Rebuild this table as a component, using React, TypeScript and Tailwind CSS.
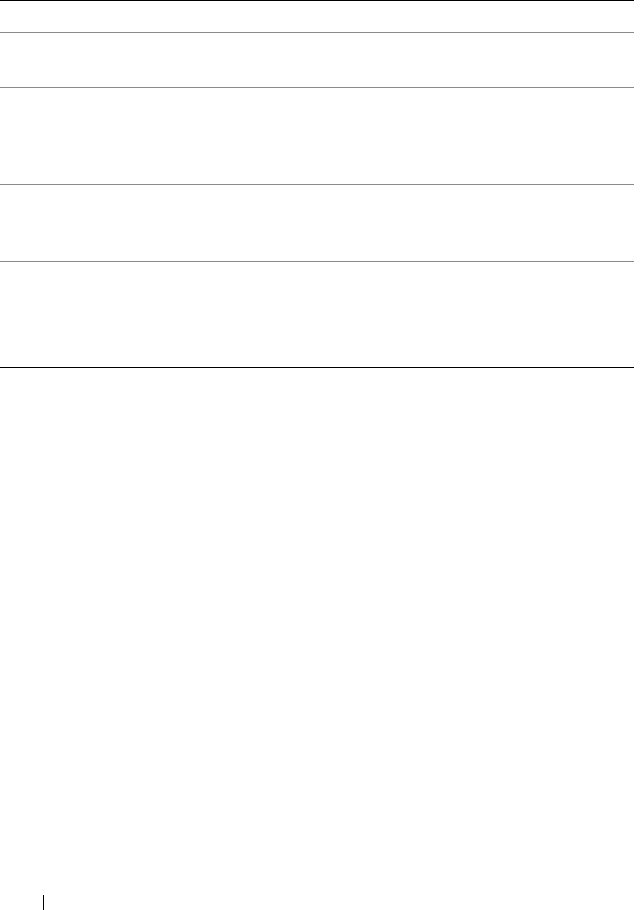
import React from "react";

const rows = [
  { h: "h-[32px]", last: false },
  { h: "h-[55px]", last: false },
  { h: "h-[97px]", last: false },
  { h: "h-[77px]", last: false },
  { h: "h-[106px]", last: true },
];

export default function App() {
  return (
    <div className="flex h-[910px] flex-col bg-white font-['Liberation_Sans',sans-serif]">
      <div className="w-[634px] border-t border-black">
        {rows.map((row, i) => (
          <div
            key={i}
            className={`${row.h} border-b ${row.last ? "border-black" : "border-[#8a8a8a]"}`}
          />
        ))}
      </div>
      <div className="mt-auto flex h-[15px] pl-[43px]">
        <div className="h-full w-px bg-black" />
      </div>
    </div>
  );
}
